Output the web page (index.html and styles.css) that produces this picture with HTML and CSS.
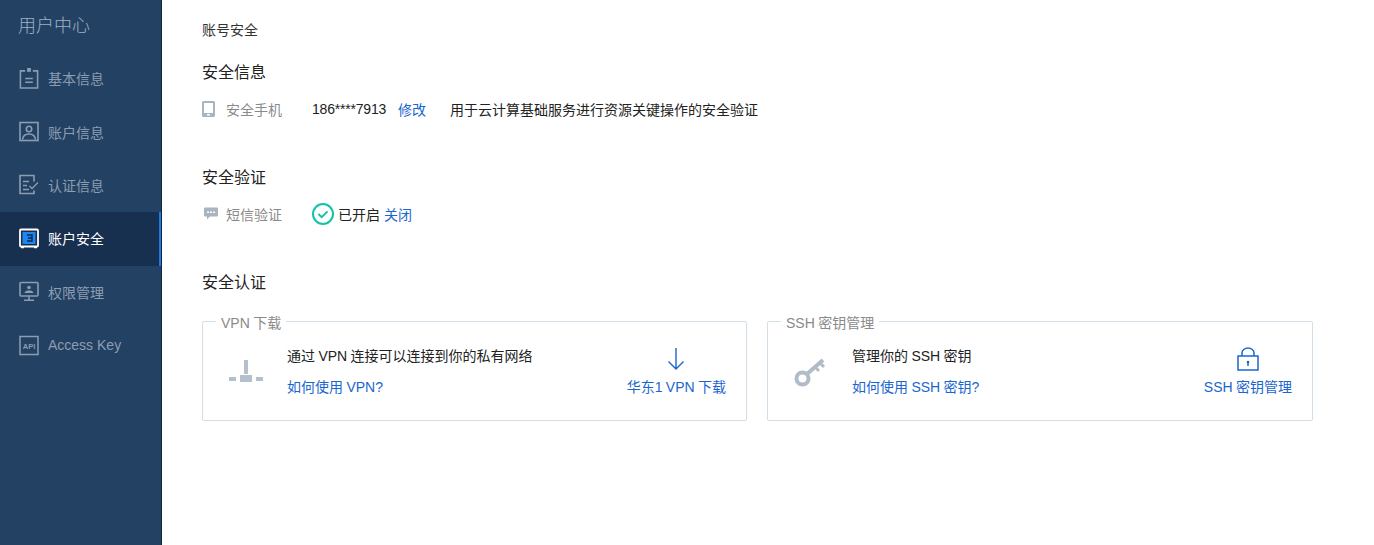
FILE: index.html
```html
<!DOCTYPE html>
<html lang="zh">
<head>
<meta charset="utf-8">
<title>账户安全</title>
<link rel="stylesheet" href="styles.css">
</head>
<body>
<div class="app">
  <aside class="sidebar">
    <h1 class="brand">用户中心</h1>
    <nav class="nav">
      <a class="nav-item"><svg class="nav-icon" viewBox="0 0 20 22" fill="none" stroke="currentColor" stroke-width="1.600"><path d="M6 3H1v18h18V3h-5"/><path d="M8 0h4v4H8z" fill="currentColor" stroke="none"/><path d="M6 11h8M6 15h8"/></svg><span>基本信息</span></a>
      <a class="nav-item"><svg class="nav-icon" viewBox="0 0 20 20" fill="none" stroke="currentColor" stroke-width="1.600"><rect x="1" y="1" width="18" height="18"/><circle cx="10" cy="7.500" r="2.700"/><path d="M3.500 18c.5-4 3-5.500 6.500-5.500s6 1.500 6.500 5.500"/></svg><span>账户信息</span></a>
      <a class="nav-item"><svg class="nav-icon" viewBox="0 0 20 20" fill="none" stroke="currentColor" stroke-width="1.600"><path d="M15 7V1H1v18h14v-3"/><path d="M4 7h6M4 11h4M4 15h6"/><path d="M10.500 11.500l2.500 2.500 6-6" stroke-width="1.300"/></svg><span>认证信息</span></a>
      <a class="nav-item active"><svg class="nav-icon" viewBox="0 0 20 20" fill="none"><rect x="1" y="1" width="18" height="17" rx="1" stroke="#fff" stroke-width="1.800"/><path d="M2 19h3M15 19h3" stroke="#fff" stroke-width="1.500"/><rect x="3.500" y="3.500" width="13" height="12" fill="#1e86f0"/><path d="M8 6.500h5v6H8M9 9.500h4" stroke="#10294a" stroke-width="1.500"/></svg><span>账户安全</span></a>
      <a class="nav-item"><svg class="nav-icon" viewBox="0 0 20 20" fill="none" stroke="currentColor" stroke-width="1.600"><rect x="1" y="1" width="18" height="13.500" rx="1"/><circle cx="10" cy="6" r="1.800" fill="currentColor" stroke="none"/><path d="M5.500 11.500c.5-2 2.500-2.500 4.500-2.500s4 .5 4.500 2.500z" fill="currentColor" stroke="none"/><path d="M10 15v3M5 18.800h10"/></svg><span>权限管理</span></a>
      <a class="nav-item"><svg class="nav-icon" viewBox="0 0 20 20" fill="none" stroke="currentColor" stroke-width="1.500"><rect x="1" y="1" width="18" height="18"/><text x="10" y="13" class="api-text">API</text></svg><span>Access Key</span></a>
    </nav>
  </aside>
  <main class="main">
    <div class="crumb">账号安全</div>
    <section class="sec-info">
      <h2 class="title">安全信息</h2>
      <div class="row">
        <span class="label"><svg class="row-icon" viewBox="0 0 13 16"><path fill="#a9b4c0" d="M1.500 0h10A1.500 1.500 0 0 1 13 1.500v13a1.500 1.500 0 0 1-1.500 1.500h-10A1.500 1.500 0 0 1 0 14.500v-13A1.500 1.500 0 0 1 1.500 0z"/><rect x="2" y="2" width="9" height="10" fill="#fff"/><rect x="5" y="13" width="3" height="1.500" fill="#fff"/></svg>安全手机</span>
        <span class="value">186****7913</span><a class="link edit">修改</a>
        <span class="note">用于云计算基础服务进行资源关键操作的安全验证</span>
      </div>
    </section>
    <section class="sec-verify">
      <h2 class="title">安全验证</h2>
      <div class="row">
        <span class="label"><svg class="row-icon sms" viewBox="0 0 14 13"><path fill="#a9b4c0" d="M1 0h12a1 1 0 0 1 1 1v7a1 1 0 0 1-1 1H6l-3 3V9H1a1 1 0 0 1-1-1V1a1 1 0 0 1 1-1z"/><path fill="#fff" d="M3 4h2v1.500H3zM6 4h2v1.500H6zM9 4h2v1.500H9z"/></svg>短信验证</span>
        <span class="status"><svg class="check" viewBox="0 0 22 22" fill="none" stroke="#14c2a8" stroke-width="2"><circle cx="11" cy="11" r="10"/><path d="M6.500 11l3.200 3.200 5.800-5.800"/></svg>已开启</span><a class="link close">关闭</a>
      </div>
    </section>
    <section class="sec-auth">
      <h2 class="title">安全认证</h2>
      <div class="cards">
        <div class="card">
          <span class="legend">VPN 下载</span>
          <svg class="card-icon" viewBox="0 0 34 24" fill="#b4c0cc"><rect x="15" y="0" width="4" height="14"/><rect x="11" y="15" width="12" height="7"/><rect x="0" y="17" width="7" height="4"/><rect x="27" y="17" width="7" height="4"/></svg>
          <div class="card-body"><p class="card-text">通过 VPN 连接可以连接到你的私有网络</p><a class="link">如何使用 VPN?</a></div>
          <a class="link action"><svg class="action-icon" viewBox="0 0 18 24" fill="none" stroke="#1a66d0" stroke-width="1.400"><path d="M9 1v21M1.500 14.500L9 22l7.500-7.500"/></svg>华东1 VPN 下载</a>
        </div>
        <div class="card">
          <span class="legend">SSH 密钥管理</span>
          <svg class="card-icon key" viewBox="0 0 32 30" fill="none" stroke="#b0bcc8"><circle cx="8.500" cy="21.500" r="6" stroke-width="4"/><path d="M13 17L29 3" stroke-width="4"/><path d="M21 10l4 4M26 6l4 4" stroke-width="3"/></svg>
          <div class="card-body"><p class="card-text">管理你的 SSH 密钥</p><a class="link">如何使用 SSH 密钥?</a></div>
          <a class="link action"><svg class="action-icon lock" viewBox="0 0 22 24" fill="none" stroke="#1a66d0" stroke-width="1.500"><rect x="1" y="9" width="20" height="14"/><path d="M5 9V6a6 5 0 0 1 12 0v3"/><circle cx="11" cy="15" r="1.300" fill="#1a66d0" stroke="none"/><path d="M11 15v4"/></svg>SSH 密钥管理</a>
        </div>
      </div>
    </section>
  </main>
</div>
</body>
</html>
```

FILE: styles.css
```css
* { box-sizing: border-box; }
html, body { margin: 0; height: 100%; }
body {
  font-family: "Liberation Sans", "Noto Sans CJK SC", sans-serif;
  font-size: 14px;
  color: #222;
  background: #fff;
}
.app { display: flex; height: 545px; overflow: hidden; }
.sidebar {
  flex: 0 0 162px;
  background: #234163;
  border-right: 1px solid #10263f;
}
.brand {
  margin: 0;
  height: 52px;
  padding-left: 18px;
  font-size: 18px;
  font-weight: 300;
  line-height: 52px;
  color: #9fb0c3;
}
.nav-item {
  display: flex;
  align-items: center;
  gap: 9px;
  height: 53.4px;
  padding: 0 0 1px 19px;
  color: #8c9db2;
}
.nav-item.active {
  background: #17304f;
  color: #fff;
  box-shadow: inset -2px 0 0 #1f7ae0;
}
.nav-icon { width: 20px; height: 21px; flex: none; }
.api-text { font-size: 7.500px; fill: currentColor; stroke: none; text-anchor: middle; font-weight: 700; }
.main { flex: 1; padding-left: 40px; }
.crumb { height: 60px; line-height: 60px; color: #333; }
.title { margin: 0; padding-top: 1px; font-size: 16px; font-weight: 400; line-height: 24px; color: #222; }
.sec-info { height: 105px; }
.sec-verify { height: 105px; }
.row { display: flex; align-items: center; height: 24px; margin-top: 12px; }
.label { display: flex; align-items: center; width: 110px; color: #8a8a8a; }
.row-icon { width: 13px; height: 16px; margin-right: 11px; flex: none; }
.sms { width: 14px; margin: 0 8px 0 2px; }
.value { color: #222; letter-spacing: -0.2px; }
.link { color: #1a66d0; }
.edit { margin-left: 12px; }
.note { margin-left: 24px; color: #222; }
.status { display: flex; align-items: center; color: #222; }
.check { width: 22px; height: 22px; margin-right: 4px; }
.close { margin-left: 4px; }
.cards { display: flex; gap: 20px; margin-top: 26px; width: 1111px; }
.card {
  position: relative;
  flex: 1 0 545px;
  display: flex;
  align-items: center;
  height: 100px;
  padding: 0 20px 0 26px;
  border: 1px solid #d3dfe6;
  border-radius: 2px;
  word-spacing: -0.5px;
}
.card:last-child { flex: 1 0 546px; }
.legend {
  position: absolute;
  left: 13px;
  top: -8px;
  padding: 0 5px;
  line-height: 18px;
  background: #fff;
  color: #8a8a8a;
}
.card-icon { width: 34px; height: 24px; margin-top: 2px; flex: none; }
.key { width: 32px; height: 30px; }
.card-body { flex: 1; margin-left: 24px; }
.key + .card-body { margin-left: 26px; }
.card-text { margin: 0 0 11px; line-height: 20px; color: #222; }
.card-body .link { display: block; line-height: 20px; }
.action { display: flex; flex-direction: column; align-items: center; margin-bottom: 2px; }
.action-icon { width: 18px; height: 24px; margin: 2px 0 5px; }
.lock { width: 22px; }
```
